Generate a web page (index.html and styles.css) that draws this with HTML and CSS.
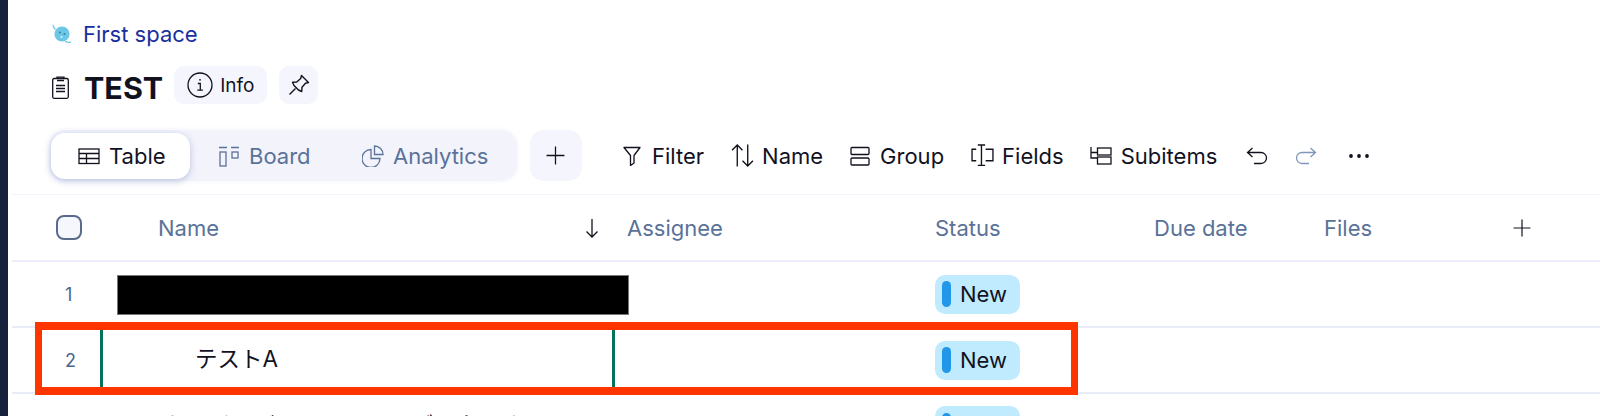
FILE: index.html
```html
<!DOCTYPE html>
<html lang="en">
<head>
<meta charset="utf-8">
<title>TEST</title>
<link rel="stylesheet" href="styles.css">
</head>
<body>
<div class="app">
  <div class="rail"></div>
  <main class="main">
    <div class="crumb">
      <svg class="i20" viewBox="0 0 20 20"><circle cx="10" cy="10" r="7.6" fill="#6cc6e6"/><path d="M1.500 1c-1 .5.500 3 2 4.500M13 17c2 1.500 5.500 2 6 .5" fill="none" stroke="#6cc6e6" stroke-width="1.200"/><circle cx="8" cy="8.500" r="1" fill="#3f7f9c"/><circle cx="12.500" cy="10" r="1" fill="#3f7f9c"/><circle cx="9.500" cy="13" r="1" fill="#dff3fa"/></svg>
      <span class="crumb-text">First space</span>
    </div>
    <div class="title-row">
      <svg class="clip" viewBox="0 0 17 23" fill="none" stroke="#12121f" stroke-width="1.300"><rect x=".7" y="2.500" width="15.600" height="19.800" rx="1.500"/><path d="M5 3V1.200h7V3M5 4.500h7"/><path d="M4 9.500h9M4 12.500h9M4 15.500h9"/></svg>
      <h1 class="title">TEST</h1>
      <button class="chip info">
        <svg class="i26" viewBox="0 0 26 26" fill="none" stroke="#12121f" stroke-width="1.300"><circle cx="13" cy="13" r="12"/><path d="M10.800 11.500h2.500v6.500M10.300 18.200h5.600"/><circle cx="13" cy="7.800" r=".9" fill="#12121f" stroke="none"/></svg>
        <span>Info</span>
      </button>
      <button class="chip pin">
        <svg class="i22" viewBox="0 0 22 22" fill="none" stroke="#12121f" stroke-width="1.400" stroke-linejoin="round"><path d="M13.500 1.500l7 7-3 .8-3.500 4-.3 4.200-3.200-1.500-4.500-4.500-1.500-3.200 4.200-.3 4-3.500zM7.500 14.500L1.500 20.500"/></svg>
      </button>
    </div>
    <div class="toolbar">
      <div class="tabs">
        <div class="tab active">
          <svg class="i22" viewBox="0 0 22 22" fill="none" stroke="#12121f" stroke-width="1.300"><rect x="1" y="4" width="20" height="14.500"/><path d="M1 8.500h20M1 13.500h20M8.500 8.500v10"/></svg>
          <span>Table</span>
        </div>
        <div class="tab board">
          <svg class="i22" viewBox="0 0 22 22" fill="none" stroke="#5a7299" stroke-width="1.300"><path d="M1 2.500h8M13 2.500h8"/><rect x="2" y="7" width="6" height="14"/><rect x="14" y="7" width="6" height="6"/></svg>
          <span>Board</span>
        </div>
        <div class="tab analytics">
          <svg class="i22" viewBox="0 0 22 22" fill="none" stroke="#5a7299" stroke-width="1.300"><path d="M9 4.500a9 9 0 1 0 9 9H9z"/><path d="M12.500 1a8.500 8.500 0 0 1 8.500 8.500h-8.500z"/></svg>
          <span>Analytics</span>
        </div>
      </div>
      <button class="add"><svg class="i19" viewBox="0 0 18 18" stroke="#12121f" stroke-width="1.200"><path d="M9 .5v17M.5 9h17"/></svg></button>
      <div class="actions">
        <div class="act a-filter">
          <svg class="i20" viewBox="0 0 18 20" fill="none" stroke="#12121f" stroke-width="1.300" stroke-linejoin="round"><path d="M1 1.500h16l-6 8v7.500l-3.500 2.500v-10z"/></svg>
          <span>Filter</span>
        </div>
        <div class="act a-name">
          <svg class="i23" viewBox="0 0 22 22" fill="none" stroke="#12121f" stroke-width="1.300"><path d="M6 21.500V1M1 6l5-5 5 5M16 .5V21M11 16l5 5 5-5"/></svg>
          <span>Name</span>
        </div>
        <div class="act a-group">
          <svg class="i20" viewBox="0 0 20 20" fill="none" stroke="#12121f" stroke-width="1.300"><rect x="1" y="1.500" width="18" height="7" rx="1"/><rect x="1" y="12" width="18" height="7" rx="1"/></svg>
          <span>Group</span>
        </div>
        <div class="act a-fields">
          <svg class="i23" viewBox="0 0 22 22" fill="none" stroke="#12121f" stroke-width="1.300"><path d="M5 5H1v11h4M14 5h7v11h-7M6.500 1h7M6.500 20.500h7M10 1v19.500"/></svg>
          <span>Fields</span>
        </div>
        <div class="act a-sub">
          <svg class="i22" viewBox="0 0 22 22" fill="none" stroke="#12121f" stroke-width="1.300"><path d="M1 2v11h7M1 7.500h7"/><rect x="7.500" y="3" width="13.500" height="7"/><rect x="7.500" y="12" width="13.500" height="7"/></svg>
          <span>Subitems</span>
        </div>
        <svg class="i22 undo" viewBox="0 0 22 22" fill="none" stroke="#12121f" stroke-width="1.300"><path d="M6.500 3L1.500 7.500l5 4.500M1.500 7.500H15a5.500 5.500 0 0 1 0 11H8"/></svg>
        <svg class="i22 redo" viewBox="0 0 22 22" fill="none" stroke="#7f97b8" stroke-width="1.300"><path d="M15.500 3l5 4.500-5 4.500M20.500 7.500H7a5.500 5.500 0 0 0 0 11h7"/></svg>
        <svg class="dots" viewBox="0 0 20 4" fill="#12121f"><circle cx="2" cy="2" r="1.900"/><circle cx="10" cy="2" r="1.900"/><circle cx="18" cy="2" r="1.900"/></svg>
      </div>
    </div>
    <div class="row head">
      <div class="c-num"><span class="check"></span></div>
      <div class="c-name">Name<svg class="sort" viewBox="0 0 14 20" fill="none" stroke="#12121f" stroke-width="1.300"><path d="M7 1v18M1.500 13.500L7 19l5.500-5.500"/></svg></div>
      <div class="c-asg">Assignee</div>
      <div class="c-status">Status</div>
      <div class="c-due">Due date</div>
      <div class="c-files">Files</div>
      <div class="c-add"><svg class="i18" viewBox="0 0 18 18" stroke="#12121f" stroke-width="1.200"><path d="M9 .5v17M.5 9h17"/></svg></div>
    </div>
    <div class="row body">
      <div class="c-num">1</div>
      <div class="c-name"></div>
      <div class="c-asg"></div>
      <div class="c-status"><span class="badge"><i></i>New</span></div>
      <div class="redact"></div>
    </div>
    <div class="row body selected">
      <div class="c-num">2</div>
      <div class="c-name"><span class="cell-text">テストA</span></div>
      <div class="c-asg"></div>
      <div class="c-status"><span class="badge"><i></i>New</span></div>
      <div class="highlight"></div>
    </div>
    <div class="row body last">
      <div class="c-num"></div>
      <div class="c-name"><span class="cell-text cut">カンバンボードのテストデータです</span></div>
      <div class="c-asg"></div>
      <div class="c-status"><span class="badge"><i></i>New</span></div>
    </div>
  </main>
</div>
</body>
</html>
```
FILE: styles.css
```css
* { box-sizing: border-box; }
html, body { margin: 0; height: 100%; overflow: hidden; background: #fff; }
body { font-family: Inter, "Noto Sans CJK JP", sans-serif; color: #12121f; }
button { font: inherit; color: inherit; border: 0; padding: 0; }
svg { display: block; flex: none; }
.i18 { width: 18px; height: 18px; }
.i19 { width: 19px; height: 19px; }
.i20 { width: 20px; height: 20px; }
.i22 { width: 22px; height: 22px; }
.i23 { width: 23px; height: 23px; }
.i26 { width: 26px; height: 26px; }

.app { display: flex; height: 416px; }
.rail { width: 8px; background: #16213e; flex: none; }
.main { flex: 1; padding-top: 22px; position: relative; overflow: hidden; }

.crumb { display: flex; align-items: center; gap: 11px; height: 24px; padding-left: 44px; }
.crumb-text { font-size: 22px; color: #1a2f9c; }

.title-row { display: flex; align-items: center; height: 38px; margin-top: 20px; padding-left: 44px; }
.clip { width: 17px; height: 23px; margin-top: 5px; }
.title { margin: 6px 0 0 15px; font-size: 30.500px; font-weight: 700; line-height: 38px; }
.chip { display: flex; align-items: center; height: 38px; background: #f4f5fd; border-radius: 10px; }
.info { width: 93px; margin-left: 11px; gap: 7px; padding-left: 13px; font-size: 19px; }
.pin { width: 39px; margin-left: 12px; justify-content: center; }

.toolbar { display: flex; align-items: center; height: 51px; margin-top: 26px; padding-left: 41px; }
.tabs { display: flex; align-items: center; width: 468px; height: 51px; background: #f2f3fb; border-radius: 16px; padding-left: 2px; box-shadow: 0 0 5px #f2f3fb; }
.tab { display: flex; align-items: center; gap: 9px; height: 46px; font-size: 22px; color: #5a7299; }
.tab.active { width: 139px; padding-left: 27px; background: #fff; color: #12121f; border-radius: 14px; box-shadow: 0 2px 7px rgba(120, 135, 190, .45); }
.board { width: 143px; padding-left: 28px; }
.analytics { padding-left: 29px; }
.add { display: flex; align-items: center; justify-content: center; width: 52px; height: 51px; margin-left: 13px; background: #f4f5fd; border-radius: 14px; }
.add svg { margin-left: -2px; }
.actions { display: flex; align-items: center; margin-left: 40px; font-size: 22px; }
.act { display: flex; align-items: center; gap: 9px; }
.a-filter { gap: 10px; }
.a-name { margin-left: 27px; gap: 8px; }
.a-group { margin-left: 27px; gap: 10px; }
.a-fields { margin-left: 27px; gap: 8px; }
.a-sub { margin-left: 26px; }
.undo { margin-left: 29px; }
.redo { margin-left: 27px; }
.dots { width: 20px; height: 4px; margin-left: 32px; }

.row { display: grid; grid-template-columns: 88px 515px 320px 219px 170px 189px 40px; align-items: center; margin-left: 4px; }
.head { height: 68px; margin-top: 13px; font-size: 22px; color: #5a7299; border-top: 1px solid #f1f2fb; border-bottom: 2px solid #ecedf9; }
.head .c-num { padding-left: 44px; }
.check { display: block; width: 26px; height: 25px; border: 2px solid #5a6a8c; border-radius: 8px; background: #f6f7fd; }
.c-name { position: relative; padding-left: 58px; }
.c-asg { padding-left: 12px; }
.sort { position: absolute; right: 16px; top: 50%; margin-top: -10px; width: 14px; height: 20px; }
.c-add { display: flex; }

.body { height: 66px; border-bottom: 2px solid #e9ebf6; position: relative; font-size: 22px; }
.body .c-num { font-size: 18px; color: #486690; padding-left: 53px; }
.cell-text { display: block; font-size: 22.500px; line-height: 32px; color: #12121f; }
.badge { display: inline-flex; align-items: center; gap: 9px; width: 85px; height: 39px; padding-left: 7px; background: #c0eafe; border-radius: 10px; color: #12121f; }
.badge i { display: block; width: 9px; height: 26px; background: #2296e8; border-radius: 5px; }
.redact { position: absolute; left: 105px; top: 13px; width: 512px; height: 40px; background: #000; border: 1px solid #777; }
.selected .c-name { display: flex; align-items: center; align-self: start; height: 57px; margin-top: 2px; padding-left: 92px; border-left: 3px solid #07705a; border-right: 3px solid #07705a; }
.highlight { position: absolute; left: 23px; top: -6px; width: 1043px; height: 73px; border-style: solid; border-color: #ff3500; border-width: 8px 7px; }
.last { align-items: start; }
.last .c-status { padding-top: 12px; }
.last .c-name { padding-top: 16px; padding-left: 62px; }
```
